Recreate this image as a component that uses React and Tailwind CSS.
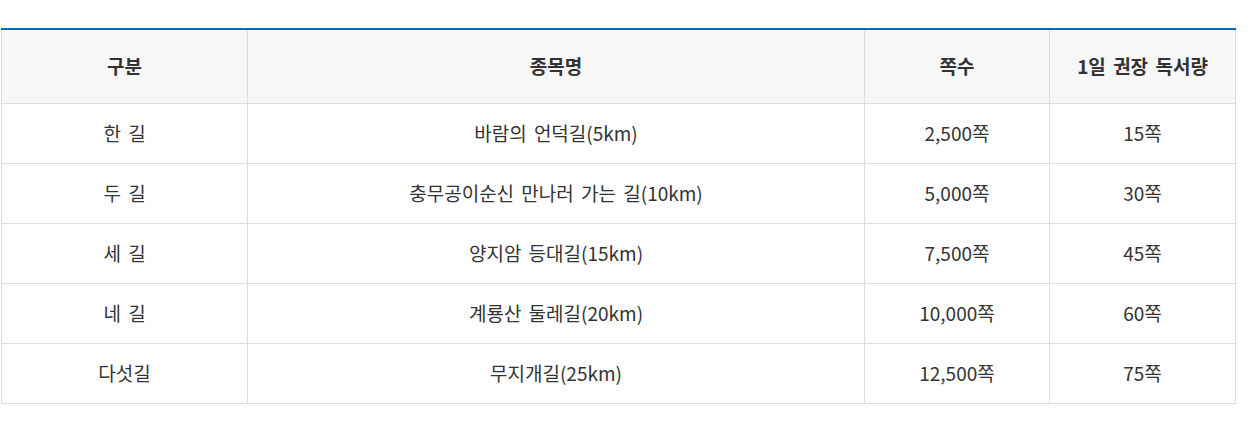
export default function App() {
  const rows = [
    ["한 길", "바람의 언덕길(5km)", "2,500쪽", "15쪽"],
    ["두 길", "충무공이순신 만나러 가는 길(10km)", "5,000쪽", "30쪽"],
    ["세 길", "양지암 등대길(15km)", "7,500쪽", "45쪽"],
    ["네 길", "계룡산 둘레길(20km)", "10,000쪽", "60쪽"],
    ["다섯길", "무지개길(25km)", "12,500쪽", "75쪽"],
  ];

  return (
    <div className="bg-white w-[1258px] h-[429px] pt-[28px] pl-px font-['Noto_Sans_CJK_KR','Noto_Sans',sans-serif]">
      <table className="w-[1234px] border-collapse table-fixed border-t-2 border-t-[#0a6cb0] text-[19px] text-[#333] [word-spacing:3px]">
        <colgroup>
          <col className="w-[246px]" />
          <col className="w-[617px]" />
          <col className="w-[185px]" />
          <col className="w-[186px]" />
        </colgroup>
        <thead>
          <tr className="h-[74px] bg-[#f7f7f7]">
            <th className="border border-[#dddddd] border-t-0 font-bold">구분</th>
            <th className="border border-[#dddddd] border-t-0 font-bold">종목명</th>
            <th className="border border-[#dddddd] border-t-0 font-bold">쪽수</th>
            <th className="border border-[#dddddd] border-t-0 font-bold">1일 권장 독서량</th>
          </tr>
        </thead>
        <tbody>
          {rows.map((r) => (
            <tr key={r[0]} className="h-[60px]">
              {r.map((c, i) => (
                <td key={i} className="border border-[#dddddd] text-center">{c}</td>
              ))}
            </tr>
          ))}
        </tbody>
      </table>
    </div>
  );
}
